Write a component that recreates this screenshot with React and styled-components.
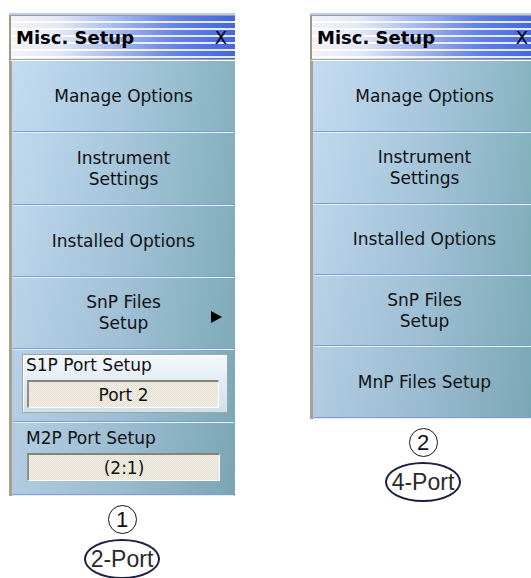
import React from "react";
import styled, { createGlobalStyle } from "styled-components";

const GlobalStyle = createGlobalStyle`
  html, body {
    margin: 0;
    padding: 0;
    background: #ffffff;
    overflow: hidden;
  }
  body {
    font-family: "DejaVu Sans", Verdana, sans-serif;
  }
`;

const leftRows = [
  { label: ["Manage Options"], h: 72 },
  { label: ["Instrument", "Settings"], h: 73 },
  { label: ["Installed Options"], h: 72 },
  { label: ["SnP Files", "Setup"], h: 72, arrow: true },
];

const rightRows = [
  { label: ["Manage Options"], h: 72 },
  { label: ["Instrument", "Settings"], h: 72 },
  { label: ["Installed Options"], h: 71 },
  { label: ["SnP Files", "Setup"], h: 71 },
  { label: ["MnP Files Setup"], h: 72 },
];

function MenuButton({ label, h, arrow }) {
  return (
    <Row h={h}>
      <RowBody>
        <span />
        <Label>
          {label.map((l) => (
            <div key={l}>{l}</div>
          ))}
        </Label>
        <ArrowCell>
          {arrow && (
            <svg width="11" height="12" viewBox="0 0 11 12">
              <polygon points="0,0 11,6 0,12" fill="#000" />
            </svg>
          )}
        </ArrowCell>
      </RowBody>
      <Rule />
    </Row>
  );
}

function TitleBar() {
  return (
    <TitleFrame>
      <Title>
        <TitleText>Misc. Setup</TitleText>
        <Close>X</Close>
      </Title>
    </TitleFrame>
  );
}

function App() {
  return (
    <>
      <GlobalStyle />
      <Page>
        <Column>
          <Panel>
            <TitleBar />
            <Body>
              {leftRows.map((r) => (
                <MenuButton key={r.label.join(" ")} {...r} />
              ))}
              <Row h={73}>
                <GroupBox>
                  <FieldLabel>S1P Port Setup</FieldLabel>
                  <Field indent={4} width={192}>
                    Port 2
                  </Field>
                </GroupBox>
                <Rule />
              </Row>
              <Row h={73}>
                <PlainGroup>
                  <FieldLabel>M2P Port Setup</FieldLabel>
                  <Field indent={15} width={193}>
                    (2:1)
                  </Field>
                </PlainGroup>
                <Rule />
              </Row>
            </Body>
          </Panel>
          <Num>1</Num>
          <Tag>2-Port</Tag>
        </Column>
        <Column>
          <Panel>
            <TitleBar />
            <Body>
              {rightRows.map((r) => (
                <MenuButton key={r.label.join(" ")} {...r} />
              ))}
            </Body>
          </Panel>
          <Num>2</Num>
          <Tag>4-Port</Tag>
        </Column>
      </Page>
    </>
  );
}

export default App;

const Page = styled.div`
  display: flex;
  align-items: flex-start;
  gap: 75px;
  padding: 13px 0 0 9px;
  width: 531px;
  height: 578px;
  box-sizing: border-box;
  overflow: hidden;
`;

const Column = styled.div`
  display: flex;
  flex-direction: column;
  align-items: center;
  width: 226px;
  flex-shrink: 0;
`;

const Panel = styled.div`
  width: 100%;
  display: flex;
  flex-direction: column;
  border-top: 2px solid #b6cdf1;
`;

const TitleFrame = styled.div`
  border-top: 1px solid #9c9c9c;
  border-left: 2px solid #9c9786;
  border-bottom: 1px solid #a3a3a3;
`;

const Title = styled.div`
  height: 43px;
  display: flex;
  align-items: center;
  justify-content: space-between;
  padding: 0 8px 0 5px;
  background:
    linear-gradient(
        to bottom,
        rgba(255, 255, 255, 0) 0px,
        rgba(255, 255, 255, 0) 5px,
        rgba(255, 255, 255, 0.85) 5px,
        rgba(255, 255, 255, 0.85) 7px
      )
      0 0 / 100% 7px repeat,
    linear-gradient(
        to right,
        #f3f4f8 0%,
        #e2e7f6 22%,
        #a3b6ee 48%,
        #6282e4 74%,
        #4466dc 100%
      )
      0 0 / 100% 100% no-repeat;
`;

const TitleText = styled.span`
  font-weight: bold;
  font-size: 18px;
  color: #000;
`;

const Close = styled.span`
  font-size: 18px;
  color: #000;
`;

const Body = styled.div`
  display: flex;
  flex-direction: column;
  border-left: 3px solid #a6a190;
  border-top: 1px solid #ffffff;
  background: linear-gradient(
      to bottom,
      rgba(10, 50, 70, 0) 0%,
      rgba(10, 50, 70, 0.1) 100%
    ),
    linear-gradient(to right, #c4dcf2 0%, #a9c9de 50%, #86b3c0 100%);
`;

const Row = styled.div`
  height: ${(p) => p.h}px;
  box-sizing: border-box;
  display: flex;
  flex-direction: column;
`;

const RowBody = styled.div`
  flex: 1;
  display: grid;
  grid-template-columns: 1fr auto 1fr;
  align-items: center;
`;

const Label = styled.div`
  text-align: center;
  font-size: 17px;
  line-height: 21px;
  color: #111;
`;

const ArrowCell = styled.div`
  display: flex;
  justify-content: flex-end;
  padding-right: 13px;
  padding-top: 8px;
`;

const Rule = styled.div`
  height: 1px;
  margin: 0 1px 1px 1px;
  background: #7c9cdc;
  box-shadow: 0 1px 0 #e6eff9;
`;

const GroupBox = styled.div`
  margin: 4px 7px 8px 10px;
  flex: 1;
  border: 1px solid #9ba7aa;
  box-shadow: inset 1px 1px 0 #ffffff;
  background: linear-gradient(to bottom, #f5f8fb 0%, #dde9f1 60%, #cfe0ea 100%);
`;

const PlainGroup = styled.div`
  flex: 1;
  padding-top: 5px;
`;

const FieldLabel = styled.div`
  font-size: 17px;
  line-height: 21px;
  color: #111;
  padding-left: 3px;
  ${PlainGroup} & {
    padding-left: 14px;
  }
`;

const Field = styled.div`
  margin: 4px 0 0 ${(p) => p.indent}px;
  width: ${(p) => p.width}px;
  height: 28px;
  box-sizing: border-box;
  border-style: solid;
  border-width: 2px 1px 1px 2px;
  border-color: #858379 #ffffff #ffffff #8f8d84;
  background-color: #f2f0e6;
  background-image: repeating-conic-gradient(#e4e1d4 0 25%, transparent 0 50%);
  background-size: 2px 2px;
  display: flex;
  align-items: center;
  justify-content: center;
  font-size: 17px;
  color: #111;
`;

const Num = styled.div`
  margin-top: 9px;
  width: 29px;
  height: 29px;
  box-sizing: border-box;
  border: 1.5px solid #151515;
  border-radius: 50%;
  display: flex;
  align-items: center;
  justify-content: center;
  font-family: "Liberation Sans", Arial, sans-serif;
  font-size: 22px;
  color: #111;
`;

const Tag = styled.div`
  margin-top: 5px;
  min-width: 76px;
  height: 40px;
  box-sizing: border-box;
  padding: 0 5px;
  border: 2px solid #1c2042;
  border-radius: 50%;
  display: flex;
  align-items: center;
  justify-content: center;
  font-family: "Liberation Sans", Arial, sans-serif;
  font-size: 23px;
  color: #2a2a2a;
`;
